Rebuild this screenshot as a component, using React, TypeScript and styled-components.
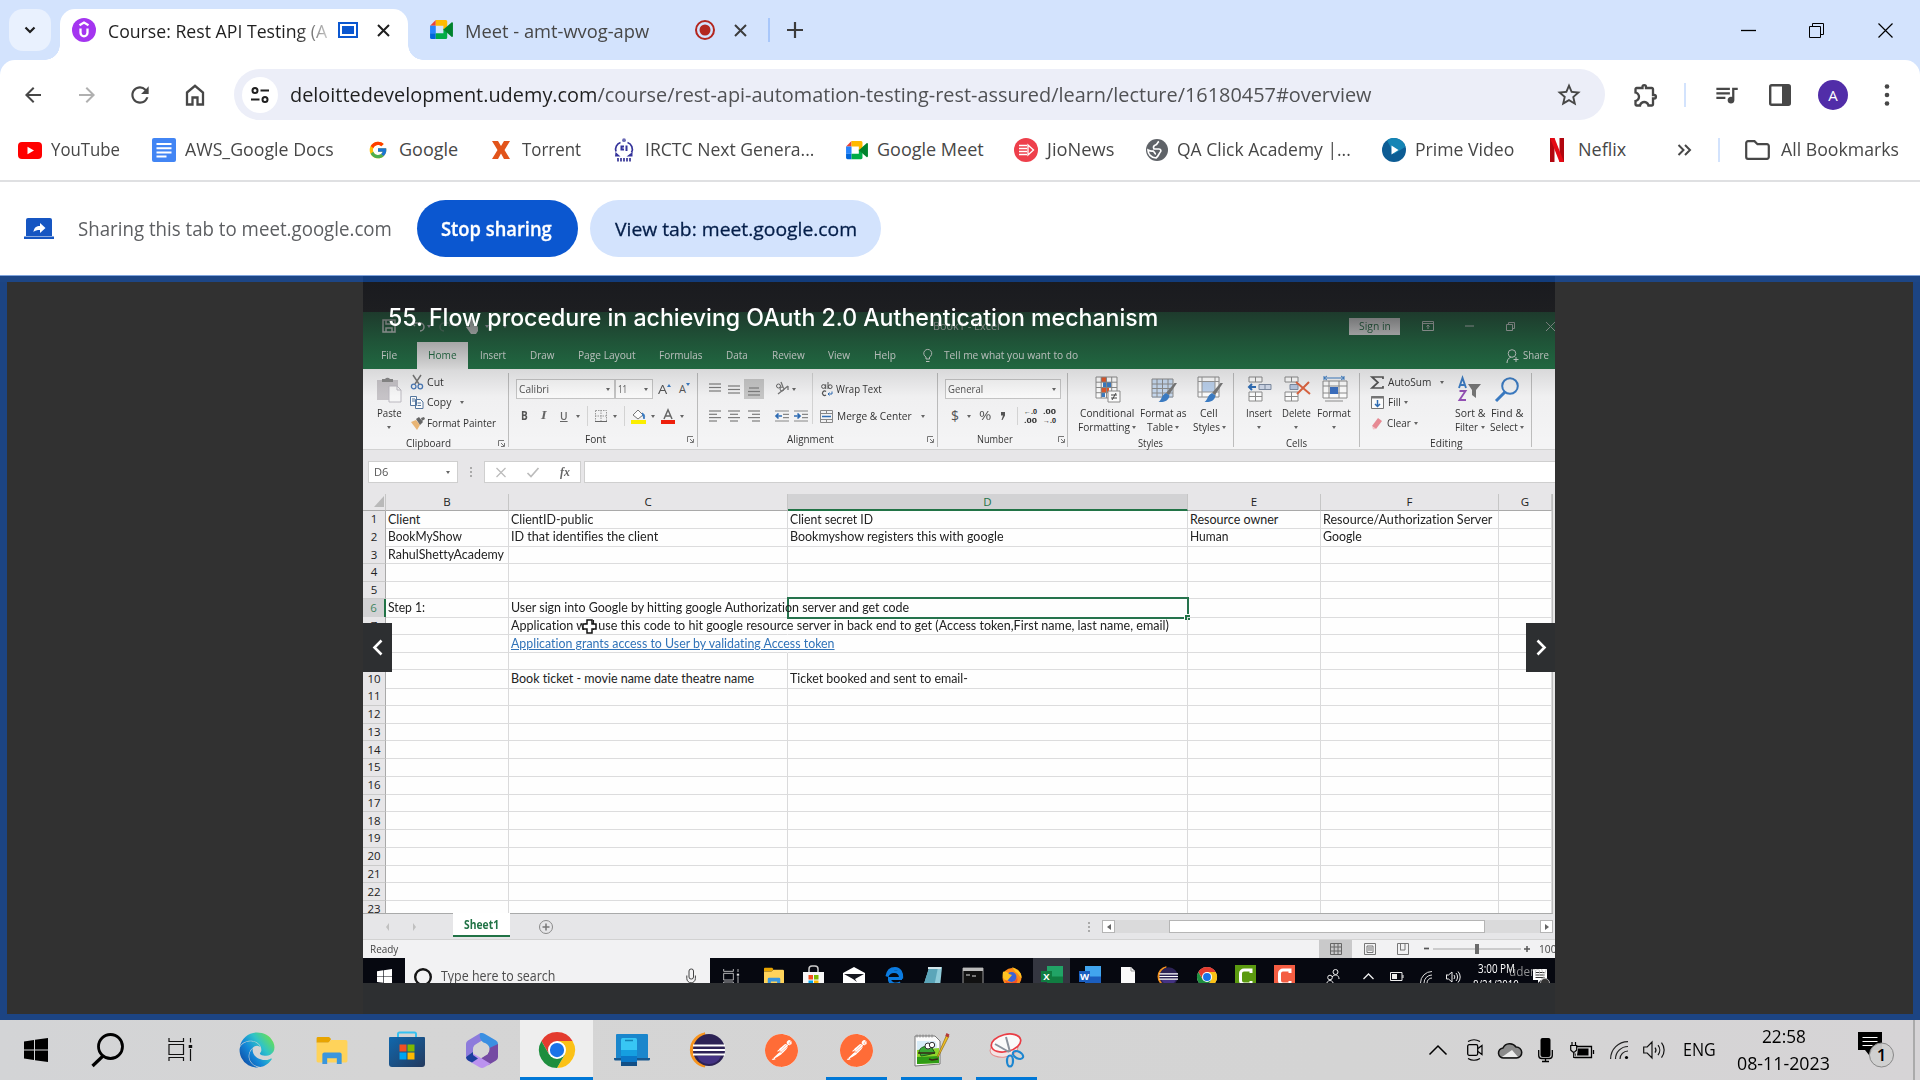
import React, { useLayoutEffect, useRef, useState } from "react";
import styled, { createGlobalStyle, css } from "styled-components";
import {
  MdArrowBack, MdArrowForward, MdRefresh, MdStarBorder, MdOutlineExtension,
  MdQueueMusic,
} from "react-icons/md";
import { FcGoogle } from "react-icons/fc";
import { FaEdge } from "react-icons/fa";
import { SiPostman } from "react-icons/si";

const UI = `"Open Sans", "Noto Sans", sans-serif`;
const SHEET = `Lato, "Open Sans", sans-serif`;

const Global = createGlobalStyle`
  *, *::before, *::after { box-sizing: border-box; }
  body { margin: 0; background: #fff; font-family: ${UI}; font-variant-ligatures: none; overflow: hidden; }
  svg { display: block; flex: none; }
`;

/* ---------- text that is condensed or widened to a known width ---------- */

const FitBox = styled.span<{ $w: number; $ml?: number; $size?: number; $color?: string; $weight?: number; $font?: string; $u?: boolean }>`
  display: inline-block;
  flex: none;
  width: ${(p) => p.$w}px;
  margin-left: ${(p) => p.$ml ?? 0}px;
  white-space: nowrap;
  line-height: 1.3;
  ${(p) => p.$size && css`font-size: ${p.$size}px;`}
  ${(p) => p.$color && css`color: ${p.$color};`}
  ${(p) => p.$weight && css`font-weight: ${p.$weight};`}
  ${(p) => p.$font && css`font-family: ${p.$font};`}
  ${(p) => p.$u && css`text-decoration: underline;`}
`;
const FitInner = styled.span`
  display: inline-block;
  transform-origin: 0 50%;
  text-decoration: inherit;
`;

type TProps = { w: number; ml?: number; s?: number; c?: string; b?: number; f?: string; u?: boolean; children: React.ReactNode };
function T({ w, ml, s, c, b, f, u, children }: TProps) {
  const ref = useRef<HTMLSpanElement>(null);
  const [k, setK] = useState(1);
  useLayoutEffect(() => {
    if (ref.current && ref.current.offsetWidth) setK(w / ref.current.offsetWidth);
  }, [w]);
  return (
    <FitBox $w={w} $ml={ml} $size={s} $color={c} $weight={b} $font={f} $u={u}>
      <FitInner ref={ref} style={{ transform: `scaleX(${k})` }}>{children}</FitInner>
    </FitBox>
  );
}

const Glyph = styled.svg<{ $ml?: number }>`
  margin-left: ${(p) => p.$ml ?? 0}px;
  overflow: visible;
`;
type GProps = { w: number; h: number; ml?: number; vb?: string; children: React.ReactNode };
const G = ({ w, h, ml, vb, children }: GProps) => (
  <Glyph width={w} height={h} viewBox={vb ?? `0 0 ${w} ${h}`} fill="none" $ml={ml}>{children}</Glyph>
);

const Slot = styled.span<{ $ml?: number; $c?: string }>`
  display: flex;
  flex: none;
  margin-left: ${(p) => p.$ml ?? 0}px;
  color: ${(p) => p.$c ?? "#474747"};
`;
const Rule = styled.i<{ $ml: number; $h: number; $c: string; $w?: number }>`
  flex: none;
  width: ${(p) => p.$w ?? 2}px;
  height: ${(p) => p.$h}px;
  margin-left: ${(p) => p.$ml}px;
  background: ${(p) => p.$c};
`;

/* ---------- shared logos ---------- */

const MeetLogo = ({ ml, w = 23 }: { ml: number; w?: number }) => (
  <G w={w} h={w * 0.83} ml={ml} vb="0 0 24 20">
    <path d="M6 0v6H0z" fill="#ea4335" />
    <path d="M0 6h6v8H0z" fill="#2684fc" />
    <path d="M0 14h6v6H1.6A1.6 1.6 0 0 1 0 18.400z" fill="#0066da" />
    <path d="M6 0h10.500A1.600 1.600 0 0 1 18 1.600V8l-4 3V6H6z" fill="#ffba00" />
    <path d="M6 14h8V9l4 3v6.400a1.600 1.600 0 0 1-1.600 1.600H6z" fill="#00ac47" />
    <path d="M14 10l8.500-7.500c.6-.5 1.500-.1 1.500.7v13.600c0 .8-.9 1.200-1.500.7z" fill="#00832d" />
  </G>
);
const ChromeLogo = ({ s, ml }: { s: number; ml?: number }) => (
  <G w={s} h={s} ml={ml} vb="0 0 48 48">
    <circle cx="24" cy="24" r="24" fill="#fff" />
    <path d="M44.800 12A24 24 0 0 1 24 48L34.400 30 34.400 18 24 12z" fill="#fbc116" />
    <path d="M3.200 12l10.400 18L24 24V12h20.800A24 24 0 0 0 3.200 12z" fill="#e33b2e" />
    <path d="M3.200 12L13.600 30 24 34 24 48A24 24 0 0 1 3.200 12z" fill="#1e8e3e" />
    <path d="M24 48L34.400 30 24 34 13.600 30z" fill="#1e8e3e" />
    <circle cx="24" cy="24" r="12" fill="#fff" />
    <circle cx="24" cy="24" r="9.500" fill="#1a73e8" />
  </G>
);
const EclipseLogo = ({ s, ml }: { s: number; ml?: number }) => (
  <G w={s} h={s} ml={ml} vb="0 0 36 36">
    <path d="M16 1.500A16.700 16.700 0 0 0 16 34.500A18 18 0 0 1 16 1.500z" fill="#f7941e" stroke="#f7941e" strokeWidth="2" />
    <circle cx="20" cy="18" r="16" fill="#2c2255" />
    <path d="M8 24h24a13 13 0 0 1-24 0z" fill="#443384" />
    <path d="M4 13.500h32M4 18h32M4 22.500h32" stroke="#fff" strokeWidth="2" />
  </G>
);
const FolderLogo = ({ w, h, ml }: { w: number; h: number; ml?: number }) => (
  <G w={w} h={h} ml={ml} vb="0 0 32 28">
    <path d="M0 1.500A1.500 1.500 0 0 1 1.500 0H13l2 2-2 4H0z" fill="#e8a400" />
    <path d="M0 6h12l3-3h15a2 2 0 0 1 2 2v20a1.500 1.500 0 0 1-1.500 1.500h-29A1.500 1.500 0 0 1 0 25z" fill="#ffd35a" />
    <path d="M6 28V18a2 2 0 0 1 2-2h16a2 2 0 0 1 2 2v10h-5v-6H11v6z" fill="#3a96dd" />
  </G>
);
const StoreLogo = ({ w, h, ml }: { w: number; h: number; ml?: number }) => (
  <G w={w} h={h} ml={ml} vb="0 0 36 36">
    <path d="M9 6V2a1.500 1.500 0 0 1 1.500-1.500h15A1.500 1.500 0 0 1 27 2v4" stroke="#35c1f1" strokeWidth="2" />
    <defs><linearGradient id="storeFill" x1="0" y1="0" x2="1" y2="1"><stop offset="0" stopColor="#1068ae" /><stop offset="1" stopColor="#243a5e" /></linearGradient></defs>
    <path d="M0 6a1 1 0 0 1 1-1h34a1 1 0 0 1 1 1v26a3 3 0 0 1-3 3H3a3 3 0 0 1-3-3z" fill="url(#storeFill)" />
    <path d="M10.500 12.500h7v7h-7z" fill="#f25022" /><path d="M18.500 12.500h7v7h-7z" fill="#7fba00" />
    <path d="M10.500 20.500h7v7h-7z" fill="#00a4ef" /><path d="M18.500 20.500h7v7h-7z" fill="#ffb900" />
  </G>
);
const WinLogo = ({ s, c, ml }: { s: number; c: string; ml?: number }) => (
  <G w={s} h={s} ml={ml} vb="0 0 24 24">
    <path d="M0 3.400L10 2v9.500H0zM11 1.800L24 0v11.500H11zM0 12.500h10V22L0 20.600zM11 12.500h13V24l-13-1.800z" fill={c} />
  </G>
);
const TaskViewGlyph = ({ s, c, ml }: { s: number; c: string; ml?: number }) => (
  <G w={s} h={s * 0.96} ml={ml} vb="0 0 24 23">
    <path d="M1 0v3.500h14.500V0M1 23v-3.500h14.500V23M1 6.500h14.500v10H1zM22.500 0v4.500M22.500 11v12" stroke={c} strokeWidth="1.200" />
    <path d="M20.700 7h3.500v3h-3.500z" fill={c} />
  </G>
);
const CloseGlyph = ({ ml, c = "#3c3c3c" }: { ml: number; c?: string }) => (
  <G w={13} h={13} ml={ml}><path d="M1 1l11 11M12 1L1 12" stroke={c} strokeWidth="2" /></G>
);

/* ---------- browser chrome ---------- */

const Screen = styled.div`
  width: 1920px;
  height: 1080px;
  display: flex;
  flex-direction: column;
`;
const TabStrip = styled.header`
  display: flex;
  height: 60px;
  padding: 9px 27px 0 9px;
  background: #d3e3fd;
`;
const TabSearch = styled.div`
  display: flex;
  align-items: center;
  justify-content: center;
  width: 42px;
  height: 42px;
  border-radius: 14px;
  background: #e9f1fe;
`;
const TabBase = styled.div`
  display: flex;
  align-items: center;
  height: 42px;
`;
const ActiveTab = styled(TabBase)`
  position: relative;
  width: 348px;
  height: 51px;
  margin-left: 9px;
  padding: 0 0 9px 12px;
  border-radius: 15px 15px 0 0;
  background: #fff;
  &::before, &::after {
    content: "";
    position: absolute;
    bottom: 0;
    width: 15px;
    height: 15px;
  }
  &::before { left: -15px; background: radial-gradient(circle at 0 0, transparent 14.500px, #fff 15px); }
  &::after { right: -15px; background: radial-gradient(circle at 100% 0, transparent 14.500px, #fff 15px); }
`;
const TabTitle = styled.div<{ $fade?: boolean }>`
  display: flex;
  margin-left: 12px;
  padding-top: 3px;
  color: ${(p) => (p.$fade ? "#1f1f1f" : "#474747")};
  ${(p) => p.$fade && css`mask-image: linear-gradient(90deg, #000 86%, rgba(0, 0, 0, 0.25) 100%);`}
`;
const WindowControls = styled(TabBase)`
  margin-left: auto;
`;
const TopPanel = styled.div`
  background: #d3e3fd;
`;
const TopPanelInner = styled.div`
  height: 122px;
  border-radius: 15px 15px 0 0;
  border-bottom: 2px solid #dfe0e2;
  background: #fff;
`;
const Toolbar = styled.nav`
  display: flex;
  align-items: center;
  height: 60px;
  padding: 9px 0 0 21px;
`;
const Omnibox = styled.div`
  display: flex;
  align-items: center;
  width: 1371px;
  height: 51px;
  margin-left: 27px;
  padding: 0 22px 0 8px;
  border-radius: 26px;
  background: #eceef8;
`;
const SiteInfo = styled.span`
  display: flex;
  align-items: center;
  justify-content: center;
  width: 36px;
  height: 36px;
  border-radius: 50%;
  background: #fff;
`;
const UrlHost = styled.span`
  color: #1f1f1f;
`;
const Push = styled.span`
  margin-left: auto;
  display: flex;
  color: #474747;
`;
const Avatar = styled.span`
  display: flex;
  align-items: center;
  justify-content: center;
  width: 30px;
  height: 30px;
  margin-left: 27px;
  border-radius: 50%;
  background: #512da8;
  color: #fff;
  font-size: 15px;
`;
const Bookmarks = styled.nav`
  display: flex;
  align-items: center;
  height: 60px;
  padding-left: 18px;
  font-size: 18px;
  color: #474747;
`;
const ShareBar = styled.div`
  display: flex;
  align-items: center;
  height: 94px;
  padding-left: 24px;
  border-bottom: 1px solid #7fa3dc;
  background: #fff;
`;
const Pill = styled.button<{ $w: number; $ml: number; $bg: string; $fg: string }>`
  display: flex;
  align-items: center;
  justify-content: center;
  width: ${(p) => p.$w}px;
  height: 57px;
  margin: 0 0 0 ${(p) => p.$ml}px;
  padding: 2px 2px 0 0;
  border: 0;
  border-radius: 29px;
  background: ${(p) => p.$bg};
  color: ${(p) => p.$fg};
  font-family: ${UI};
  -webkit-text-stroke: 0.3px currentColor;
`;

function BrowserTop() {
  return (
    <>
      <TabStrip>
        <TabSearch><G w={12} h={8}><path d="M1.500 1.500L6 6l4.500-4.500" stroke="#1f1f1f" strokeWidth="2.200" /></G></TabSearch>
        <ActiveTab>
          <G w={24} h={24}>
            <circle cx="12" cy="12" r="12" fill="#a435f0" />
            <path d="M7.500 7.200L12 4.600l4.500 2.600M8.500 10.500v4.300a3.500 3.500 0 0 0 7 0v-4.300" stroke="#fff" strokeWidth="2.300" />
          </G>
          <TabTitle $fade><T w={219} s={18}>Course: Rest API Testing (A</T></TabTitle>
          <G w={20} h={16} ml={11}>
            <path d="M1 1h18v14H1z" stroke="#0b57d0" strokeWidth="2" /><path d="M4 4h12v8H4z" fill="#0b57d0" />
          </G>
          <CloseGlyph ml={19} c="#1f1f1f" />
        </ActiveTab>
        <TabBase>
          <MeetLogo ml={22} />
          <TabTitle><T w={184} s={18}>Meet - amt-wvog-apw</T></TabTitle>
          <G w={20} h={20} ml={46}>
            <circle cx="10" cy="10" r="9" stroke="#b3261e" strokeWidth="2" /><circle cx="10" cy="10" r="5.500" fill="#b3261e" />
          </G>
          <CloseGlyph ml={19} />
          <Rule $ml={21} $h={24} $c="#a8c7fa" />
          <G w={16} h={16} ml={17}><path d="M8 0v16M0 8h16" stroke="#3c3c3c" strokeWidth="2.200" /></G>
        </TabBase>
        <WindowControls>
          <G w={15} h={15}><path d="M0 7.500h15" stroke="#000" strokeWidth="1.300" /></G>
          <G w={15} h={15} ml={53}><path d="M.5 3.500h11v11H.5zM3.500 3.500v-3h11v11h-3" stroke="#000" /></G>
          <G w={15} h={15} ml={54}><path d="M.5.5l14 14M14.500.5l-14 14" stroke="#000" strokeWidth="1.200" /></G>
        </WindowControls>
      </TabStrip>
      <TopPanel>
        <TopPanelInner>
          <Toolbar>
            <Slot><MdArrowBack size={24} /></Slot>
            <Slot $ml={30} $c="#b0b0b0"><MdArrowForward size={24} /></Slot>
            <Slot $ml={28}><MdRefresh size={26} /></Slot>
            <G w={24} h={24} ml={30}>
              <path d="M4 9.500L12 2.800l8 6.700V21.500h-5.500v-7h-5v7H4z" stroke="#474747" strokeWidth="2.300" />
            </G>
            <Omnibox>
              <SiteInfo>
                <G w={18} h={18}>
                  <circle cx="4" cy="4.500" r="2.500" stroke="#1f1f1f" strokeWidth="2" /><path d="M9.500 4.500H18M0 13.500h8.500" stroke="#1f1f1f" strokeWidth="2" />
                  <circle cx="14" cy="13.500" r="2.500" stroke="#1f1f1f" strokeWidth="2" />
                </G>
              </SiteInfo>
              <T w={1082} ml={12} s={20.5} c="#505154">
                <UrlHost>deloittedevelopment.udemy.com</UrlHost>/course/rest-api-automation-testing-rest-assured/learn/lecture/16180457#overview
              </T>
              <Push><MdStarBorder size={28} /></Push>
            </Omnibox>
            <Slot $ml={27}><MdOutlineExtension size={28} /></Slot>
            <Rule $ml={24} $h={24} $c="#d3e3fd" />
            <Slot $ml={27}><MdQueueMusic size={27} /></Slot>
            <G w={22} h={22} ml={29}>
              <rect x="1.200" y="1.200" width="19.600" height="19.600" rx="1.500" stroke="#474747" strokeWidth="2.400" />
              <path d="M13 1h8v20h-8z" fill="#474747" />
            </G>
            <Avatar>A</Avatar>
            <G w={6} h={22} ml={36}>
              <circle cx="3" cy="2.500" r="2.300" fill="#474747" /><circle cx="3" cy="11" r="2.300" fill="#474747" /><circle cx="3" cy="19.500" r="2.300" fill="#474747" />
            </G>
          </Toolbar>
          <Bookmarks>
            <G w={24} h={17}><rect width="24" height="17" rx="4" fill="#f00" /><path d="M9.500 4.800l6.500 3.700-6.500 3.700z" fill="#fff" /></G>
            <T w={69} ml={9}>YouTube</T>
            <G w={24} h={24} ml={32}>
              <rect width="24" height="24" rx="2" fill="#4285f4" /><path d="M4.500 6h15M4.500 10.200h15M4.500 14.400h15M4.500 18.600h10" stroke="#fff" strokeWidth="2" />
            </G>
            <T w={149} ml={9}>AWS_Google Docs</T>
            <Slot $ml={34}><FcGoogle size={20} /></Slot>
            <T w={59} ml={11}>Google</T>
            <G w={18} h={18} ml={34}><path d="M0 0h6l3 5 3-5h6l-5.500 9L18 18h-6l-3-5.500L6 18H0l5.500-9z" fill="#e2541b" /></G>
            <T w={59} ml={12}>Torrent</T>
            <G w={22} h={24} ml={32}>
              <path d="M7.500 4.500a7 7 0 0 0-4.500 9M14.500 4.500a7 7 0 0 1 4 10" stroke="#34339a" strokeWidth="1.700" />
              <path d="M7.500 7.500h3.500v2H9.500v1H11v2H7.500zM12.500 7.500h2v5.500h-2zM2.500 14l5 4.500H2zM19.500 14l-6 4.500h6z" fill="#35349b" /><circle cx="11" cy="2.200" r="1.900" fill="#6c6bb5" />
              <path d="M4 21.800h14" stroke="#5352a5" strokeWidth="3.500" strokeDasharray="2 1" />
            </G>
            <T w={169} ml={10}>IRCTC Next Genera...</T>
            <MeetLogo ml={32} w={22} />
            <T w={107} ml={9}>Google Meet</T>
            <G w={24} h={24} ml={30}>
              <circle cx="12" cy="12" r="12" fill="#ee3f4b" /><path d="M5 7.500h8M5 10.500h8M5 13.500h8M5 16.500h8" stroke="#fff" strokeWidth="1.700" />
              <path d="M14 7l5.500 5-5.500 5z" stroke="#fff" strokeWidth="1.300" />
            </G>
            <T w={67} ml={9}>JioNews</T>
            <G w={22} h={22} ml={32}>
              <circle cx="11" cy="11" r="11" fill="#5f6368" />
              <path d="M13 2.500c-2 1-1.500 3-3.500 3.500S7 8.500 8 10h5c2 0 2.500 2 1 3.500s-1 3.500-4 5.500c-5-.5-8-4-8-8 2 1 3.500 1.500 5 1 2 1 1.500 3 3 3" stroke="#fff" strokeWidth="1.700" />
            </G>
            <T w={174} ml={9}>QA Click Academy |...</T>
            <G w={24} h={24} ml={31}>
              <circle cx="12" cy="12" r="12" fill="#0d5c94" /><path d="M5 2.200a12 12 0 0 1 18.500 6.500L12 16z" fill="#1585b5" /><path d="M9.500 7.500l7 4.500-7 4.500z" fill="#fff" />
            </G>
            <T w={99} ml={9}>Prime Video</T>
            <G w={14} h={24} ml={36}>
              <path d="M0 0h4.500v24H0zM9.500 0H14v24H9.500z" fill="#b1060f" /><path d="M0 0h4.500L14 24H9.500z" fill="#e50914" />
            </G>
            <T w={48} ml={14}>Neflix</T>
            <G w={15} h={12} ml={51}><path d="M1.500 1l5 5-5 5M8 1l5 5-5 5" stroke="#474747" strokeWidth="2" /></G>
            <Rule $ml={26} $h={24} $c="#d3e3fd" />
            <G w={25} h={20} ml={25}>
              <path d="M1.200 3a1.800 1.800 0 0 1 1.800-1.800h6.500l3 3H22A1.800 1.800 0 0 1 23.800 6v11a1.800 1.800 0 0 1-1.800 1.800H3A1.800 1.800 0 0 1 1.200 17z" stroke="#474747" strokeWidth="2.200" />
            </G>
            <T w={118} ml={11}>All Bookmarks</T>
          </Bookmarks>
        </TopPanelInner>
      </TopPanel>
      <ShareBar>
        <G w={30} h={21}>
          <path d="M4 0h22a2 2 0 0 1 2 2v16H2V2a2 2 0 0 1 2-2zM0 18.500h30V21H0z" fill="#1656c2" />
          <path d="M9.500 14c.5-4.500 3-6 6.500-6V5l5.500 5-5.500 5v-3c-3 0-5 .5-6.500 2z" fill="#fff" />
        </G>
        <T w={314} ml={24} s={20} c="#5d5f62">Sharing this tab to meet.google.com</T>
        <Pill $w={161} $ml={25} $bg="#0b57d0" $fg="#fff"><T w={111} s={19} b={600}>Stop sharing</T></Pill>
        <Pill $w={291} $ml={12} $bg="#d3e3fd" $fg="#041e49"><T w={242} s={19} b={500}>View tab: meet.google.com</T></Pill>
      </ShareBar>
    </>
  );
}

/* ---------- lecture player ---------- */

const Page = styled.main`
  flex: none;
  height: 744px;
  padding: 6px 7px;
  background:
    linear-gradient(90deg, #1d4686 363px, #123c7b 363px, #123c7b 1555px, #1d4686 1555px) top / 100% 6px no-repeat,
    #1c4483;
`;
const PageBody = styled.div`
  height: 732px;
  padding-left: 356px;
  background: #313131;
`;
const Player = styled.section`
  position: relative;
  width: 1192px;
  height: 732px;
  padding-top: 30px;
  background: linear-gradient(#1a1b1f, #1d1e21 30px, #2d2f31 30px);
`;
const Video = styled.div`
  height: 671px;
  overflow: hidden;
  background: #e6e6e6;
`;
const Shade = styled.div`
  position: absolute;
  top: 30px;
  left: 0;
  width: 100%;
  height: 130px;
  background: linear-gradient(rgba(28, 29, 31, 0.66), rgba(28, 29, 31, 0.36) 23%, rgba(28, 29, 31, 0.12) 45%, rgba(28, 29, 31, 0.02) 65%, rgba(28, 29, 31, 0));
`;
const LectureTitle = styled.div`
  position: absolute;
  top: 20px;
  left: 25px;
`;
const NavButton = styled.div<{ $side: "left" | "right" }>`
  position: absolute;
  top: 341px;
  ${(p) => p.$side}: 0;
  display: flex;
  align-items: center;
  justify-content: center;
  width: 29px;
  height: 49px;
  background: #2d2f31;
`;
const Watermark = styled.div`
  position: absolute;
  top: 677px;
  left: 1146px;
`;

/* ---------- spreadsheet window ---------- */

const Caret = styled.i<{ $ml?: number; $c?: string }>`
  flex: none;
  width: 0;
  height: 0;
  margin-left: ${(p) => p.$ml ?? 0}px;
  border: 2.500px solid transparent;
  border-top: 3px solid ${(p) => p.$c ?? "#666"};
  border-bottom: 0;
`;
const TitleRow = styled.div`
  display: flex;
  align-items: center;
  height: 30px;
  padding: 0 0 2px 19px;
  background: #217346;
`;
const SignIn = styled.div`
  display: flex;
  align-items: center;
  justify-content: center;
  width: 51px;
  height: 17px;
  margin-left: 349px;
  background: #fff;
`;
const MenuRow = styled.div`
  display: flex;
  align-items: center;
  height: 27px;
  background: #217346;
  color: #e9f1ec;
  font-size: 11.500px;
`;
const HomeTab = styled.span`
  display: flex;
  align-items: center;
  justify-content: center;
  align-self: stretch;
  width: 51px;
  margin-left: 20px;
  background: #f3f3f3;
  color: #217346;
`;
const Ribbon = styled.div`
  display: flex;
  height: 81px;
  padding-top: 4px;
  border-bottom: 1px solid #d2d2d2;
  background: #f4f4f5;
  font-size: 11.500px;
  color: #333;
`;
const Group = styled.div<{ $w: number }>`
  display: flex;
  flex-direction: column;
  flex: none;
  width: ${(p) => p.$w}px;
  height: 74px;
  border-right: 1px solid #bdbdbd;
`;
const GroupBody = styled.div`
  display: flex;
  height: 62px;
`;
const GroupFoot = styled.div`
  display: flex;
  align-items: center;
  height: 15px;
  margin-top: 1px;
`;
const Stack = styled.div`
  display: flex;
  flex-direction: column;
`;
const Line = styled.div<{ $h: number; $pl?: number }>`
  display: flex;
  align-items: center;
  height: ${(p) => p.$h}px;
  padding-left: ${(p) => p.$pl ?? 0}px;
`;
const BigButton = styled.div<{ $w: number; $ml?: number }>`
  display: flex;
  flex-direction: column;
  align-items: center;
  flex: none;
  width: ${(p) => p.$w}px;
  margin-left: ${(p) => p.$ml ?? 0}px;
  padding-top: 3px;
`;
const BigLine = styled.div<{ $mt?: number }>`
  display: flex;
  align-items: center;
  height: 14.500px;
  margin-top: ${(p) => p.$mt ?? 0}px;
`;
const Combo = styled.div<{ $w: number; $ml?: number }>`
  display: flex;
  align-items: center;
  flex: none;
  width: ${(p) => p.$w}px;
  height: 20px;
  margin-left: ${(p) => p.$ml ?? 0}px;
  padding: 0 4px 0 2px;
  border: 1px solid #c6c6c6;
  background: #fcfcfc;
  color: #555;
`;
const ComboCaret = styled(Caret)`
  margin-left: auto;
`;
const Pressed = styled.span`
  display: flex;
  align-items: center;
  justify-content: center;
  width: 20px;
  height: 20px;
  margin-left: 4px;
  background: #c8c8c8;
`;

const Launcher = ({ ml }: { ml: number }) => (
  <G w={7} h={7} ml={ml}><path d="M.5 6V.5H6M3 3l3 3M6.500 3v3.500H3" stroke="#777" /></G>
);
const Bars = ({ ml, rows }: { ml?: number; rows: [number, number, number][] }) => (
  <G w={12} h={12} ml={ml}>{rows.map(([x, y, w]) => <path key={y} d={`M${x} ${y}h${w}`} stroke="#7d7d7d" strokeWidth="1.200" />)}</G>
);
const Grid27 = ({ c }: { c: string }) => (
  <path d="M2 1h21v21H2zM2 6.200h21M2 11.500h21M2 16.700h21M7.200 1v21M12.500 1v21M17.700 1v21" stroke={c} />
);
const Brush = () => (
  <><path d="M27 7l-8 12-3-2L24.500 7z" fill="#777" /><path d="M16 17l3.500 2.500c-1 6-6 7-11 6.500 3-1.500 3-7 7.500-9z" fill="#3b7cc4" /></>
);

function RibbonPanel() {
  return (
    <Ribbon>
      <Group $w={146}>
        <GroupBody>
          <BigButton $w={26} $ml={13}>
            <G w={26} h={27}>
              <path d="M1 4h21v20H1z" fill="#c9c6ca" /><path d="M6 6V3h3a3 3 0 0 1 5 0h3v3z" fill="#8b8b8b" />
              <path d="M13 10h8l4 4v12H13z" fill="#fafafa" stroke="#bdbac2" /><path d="M21 10v4h4" stroke="#bdbac2" />
            </G>
            <BigLine $mt={3}><T w={24.5}>Paste</T></BigLine>
            <BigLine><Caret /></BigLine>
          </BigButton>
          <Stack>
            <Line $h={19} $pl={9}>
              <G w={12} h={15}><path d="M2 0l6 9M10 0L4 9" stroke="#777" strokeWidth="1.500" /><circle cx="2.700" cy="11.500" r="2.300" stroke="#4a7ab8" strokeWidth="1.300" /><circle cx="9.300" cy="11.500" r="2.300" stroke="#4a7ab8" strokeWidth="1.300" /></G>
              <T w={16.5} ml={4}>Cut</T>
            </Line>
            <Line $h={21} $pl={8}>
              <G w={14} h={13}><path d="M.5.5h6v9h-6zM5.500 3.500h5l2.500 2.500v6.500H5.500z" fill="#fff" stroke="#5577a0" /><path d="M2 3h3M2 5h3M7.500 7h3.500M7.500 9.500h3.500" stroke="#5577a0" /></G>
              <T w={24.500} ml={3}>Copy</T><Caret $ml={8} />
            </Line>
            <Line $h={21} $pl={9}>
              <G w={14} h={13}><path d="M0 5l5-2 4 5-3 5z" fill="#eab676" /><path d="M5 2l3-2 4 5-3 3zM10 1l3-1 1 2-3 2z" fill="#666" /></G>
              <T w={69} ml={2}>Format Painter</T>
            </Line>
          </Stack>
        </GroupBody>
        <GroupFoot><T w={45} ml={43}>Clipboard</T><Launcher ml={47} /></GroupFoot>
      </Group>

      <Group $w={189}>
        <GroupBody>
          <Stack>
            <Line $h={32} $pl={7}>
              <Combo $w={99}><T w={30}>Calibri</T><ComboCaret /></Combo>
              <Combo $w={38}><T w={9}>11</T><ComboCaret /></Combo>
              <T w={9} ml={5} s={13} c="#555">A</T><G w={4} h={10}><path d="M0 3l2-3 2 3z" fill="#3b7cc4" /></G>
              <T w={7} ml={8} s={11} c="#555">A</T><G w={4} h={12}><path d="M0 0h4L2 3z" fill="#3b7cc4" /></G>
            </Line>
            <Line $h={22} $pl={12}>
              <T w={7} s={11.5} b={700} c="#555">B</T><T w={6} ml={13} s={12} b={600} c="#666" f={`"Liberation Serif"`}><em>I</em></T><T w={8} ml={13} s={11.5} b={600} c="#666" u>U</T>
              <Caret $ml={8} /><Rule $ml={7} $h={20} $c="#d5d5d5" $w={1} />
              <G w={12} h={12} ml={7}><path d="M.5.5h11v11H.5zM6 0v12M0 6h12" stroke="#9a9a9a" strokeDasharray="1.500 1" /><path d="M0 11.500h12" stroke="#666" /></G>
              <Caret $ml={6} /><Rule $ml={7} $h={20} $c="#d5d5d5" $w={1} />
              <G w={15} h={15} ml={6}><path d="M2 6l5-5 5 5-5 4z" fill="#fff" stroke="#777" /><path d="M11 4c3 1 3 4 2 6z" fill="#3b7cc4" stroke="#3b7cc4" /><path d="M0 11h15v4H0z" fill="#fdf000" /></G>
              <Caret $ml={5} />
              <G w={14} h={15} ml={6}><path d="M3 10L7 .8 11 10M4.500 7h5" stroke="#666" strokeWidth="1.500" /><path d="M0 11h14v4H0z" fill="#f0200c" /></G>
              <Caret $ml={5} />
            </Line>
          </Stack>
        </GroupBody>
        <GroupFoot><T w={21} ml={76}>Font</T><Launcher ml={81} /></GroupFoot>
      </Group>

      <Group $w={240}>
        <GroupBody>
          <Stack>
            <Line $h={32} $pl={11}>
              <Bars rows={[[0, 1, 12], [0, 4.500, 12], [0, 8, 12]]} />
              <Bars ml={7} rows={[[0, 3, 12], [0, 6.500, 12], [0, 10, 12]]} />
              <Pressed><Bars rows={[[1, 5, 10], [0, 8.500, 12], [0, 12, 12]]} /></Pressed>
              <G w={14} h={14} ml={11}><circle cx="3.500" cy="4" r="2" stroke="#666" /><circle cx="7" cy="7" r="2" stroke="#666" /><path d="M6 0l2 5M3 12L13 4M13 4v4" stroke="#777" strokeWidth="1.300" /></G>
              <Caret $ml={3} />
            </Line>
            <Line $h={22} $pl={11}>
              <Bars rows={[[0, 1, 12], [0, 4.300, 8], [0, 7.600, 12], [0, 11, 8]]} />
              <Bars ml={7} rows={[[0, 1, 12], [2, 4.300, 8], [0, 7.600, 12], [2, 11, 8]]} />
              <Bars ml={8} rows={[[0, 1, 12], [4, 4.300, 8], [0, 7.600, 12], [4, 11, 8]]} />
              <G w={14} h={12} ml={15}><path d="M0 1h14M8 4.300h6M8 7.600h6M0 11h14" stroke="#888" strokeWidth="1.200" /><path d="M7 6H1M3.500 3.500L1 6l2.500 2.500" stroke="#2f6db5" strokeWidth="1.700" /></G>
              <G w={14} h={12} ml={5}><path d="M0 1h14M8 4.300h6M8 7.600h6M0 11h14" stroke="#888" strokeWidth="1.200" /><path d="M0 6h6M3.500 3.500L6 6 3.500 8.500" stroke="#2f6db5" strokeWidth="1.700" /></G>
            </Line>
          </Stack>
          <Rule $ml={4} $h={51} $c="#d5d5d5" $w={1} />
          <Stack>
            <Line $h={32} $pl={8}>
              <G w={12} h={14}>
                <circle cx="2.500" cy="4.500" r="1.900" stroke="#555" /><path d="M4.700 2.300V7M7 0v7" stroke="#555" /><circle cx="9.200" cy="4.700" r="1.900" stroke="#555" />
                <path d="M5 9.500a2.200 2.200 0 1 0 0 3.500" stroke="#555" strokeWidth="1.200" /><path d="M7 12h4V9.500M8.500 10.500L7 12l1.500 1.500" stroke="#2f6db5" />
              </G>
              <T w={46} ml={3}>Wrap Text</T>
            </Line>
            <Line $h={22} $pl={7}>
              <G w={13} h={13}><path d="M.5.5h12v12H.5zM0 3.500h13M0 9.500h13M6.500 0v3.500M6.500 9.500V13" stroke="#888" /><path d="M2 6.500h9" stroke="#2f6db5" strokeWidth="1.500" /></G>
              <T w={75} ml={4}>Merge &amp; Center</T><Caret $ml={9} />
            </Line>
          </Stack>
        </GroupBody>
        <GroupFoot><T w={47} ml={89}>Alignment</T><Launcher ml={93} /></GroupFoot>
      </Group>

      <Group $w={130}>
        <GroupBody>
          <Stack>
            <Line $h={32} $pl={7}><Combo $w={116}><T w={35}>General</T><ComboCaret /></Combo></Line>
            <Line $h={22} $pl={13}>
              <T w={8} s={14} c="#555">$</T><Caret $ml={8} /><T w={12} ml={8} s={12.5} c="#555">%</T>
              <G w={4} h={8} ml={10}><path d="M0 0h4v3.500L1.500 8H.5L2 3.500H0z" fill="#555" /></G>
              <Rule $ml={12} $h={18} $c="#d5d5d5" $w={1} />
              <Stack><T w={13} ml={6} s={7}><b>←.0</b></T><T w={13} ml={6} s={7}><b>.00</b></T></Stack>
              <Stack><T w={13} ml={6} s={7}><b>.00</b></T><T w={13} ml={6} s={7}><b>→.0</b></T></Stack>
            </Line>
          </Stack>
        </GroupBody>
        <GroupFoot><T w={36} ml={39}>Number</T><Launcher ml={45} /></GroupFoot>
      </Group>

      <Group $w={166}>
        <GroupBody>
          <BigButton $w={60} $ml={9}>
            <G w={27} h={27}>
              <path d="M2 1h21v21H2z" fill="#fff" /><path d="M7 1h6v5H7zM7 12h8v5H7z" fill="#e2592b" /><path d="M9 6h8v5H9zM7 17h4v4H7z" fill="#3b7cc4" /><Grid27 c="#8c8c8c" />
              <path d="M14 15h12v11H14z" fill="#fff" stroke="#8c8c8c" /><path d="M17 19h6M17 22h6M22 17l-4 7" stroke="#444" />
            </G>
            <BigLine $mt={3}><T w={54}>Conditional</T></BigLine>
            <BigLine><T w={52}>Formatting</T><Caret $ml={2} /></BigLine>
          </BigButton>
          <BigButton $w={48} $ml={2}>
            <G w={27} h={27}><path d="M2 3h21v19H2z" fill="#c8dbf2" /><path d="M2 3h21v18H2zM2 8h21M2 12.500h21M2 17h21M7 3v18M12.500 3v18M18 3v18" stroke="#8c8c8c" /><Brush /></G>
            <BigLine $mt={3}><T w={47}>Format as</T></BigLine>
            <BigLine><T w={26}>Table</T><Caret $ml={2} /></BigLine>
          </BigButton>
          <BigButton $w={34} $ml={5}>
            <G w={27} h={27}><path d="M2 1h21v20H2z" fill="#fff" stroke="#8c8c8c" /><path d="M6 6h13v10H6z" fill="#bcd2ee" /><path d="M2 5.500h21M2 16h21M6 1v20M19 1v20" stroke="#999" /><Brush /></G>
            <BigLine $mt={3}><T w={18}>Cell</T></BigLine>
            <BigLine><T w={27}>Styles</T><Caret $ml={2} /></BigLine>
          </BigButton>
        </GroupBody>
        <GroupFoot><T w={25} ml={70}>Styles</T></GroupFoot>
      </Group>

      <Group $w={126}>
        <GroupBody>
          <BigButton $w={28} $ml={11}>
            <G w={27} h={27}><path d="M3 1h13v5H3zM9.500 1v5M3 16h13v9H3zM9.500 16v9M3 20.500h13" stroke="#8c8c8c" fill="#fff" /><path d="M13 8.500h12v5H13zM19 8.500v5" fill="#d3dced" stroke="#7f8da3" /><path d="M10 11H3M6 8l-3 3 3 3" stroke="#2f6db5" strokeWidth="2" /></G>
            <BigLine $mt={3}><T w={26}>Insert</T></BigLine><BigLine><Caret /></BigLine>
          </BigButton>
          <BigButton $w={32} $ml={7}>
            <G w={27} h={27}><path d="M2 1h13v5H2zM8.500 1v5M2 16h13v9H2zM8.500 16v9M2 20.500h13" stroke="#8c8c8c" fill="#fff" /><path d="M7 8.500h8v5H7z" fill="#b9c9e2" stroke="#7f8da3" /><path d="M13 6l14 12M26 6L14 18" stroke="#dd6440" strokeWidth="2" /></G>
            <BigLine $mt={3}><T w={29}>Delete</T></BigLine><BigLine><Caret /></BigLine>
          </BigButton>
          <BigButton $w={36} $ml={4}>
            <G w={27} h={27}><path d="M3 2h20M3 0v4M23 0v4M6 0L3 2l3 2M20 0l3 2-3 2" stroke="#3b7cc4" /><path d="M2 5h24v17H2zM2 10h24M2 17h24M8 5v17M18 5v17M4 25h18" stroke="#8c8c8c" fill="#fff" /><path d="M9 11h8v7H9z" fill="#3b6fc0" /></G>
            <BigLine $mt={3}><T w={34}>Format</T></BigLine><BigLine><Caret /></BigLine>
          </BigButton>
        </GroupBody>
        <GroupFoot><T w={21} ml={52}>Cells</T></GroupFoot>
      </Group>

      <Group $w={172}>
        <GroupBody>
          <Stack>
            <Line $h={19} $pl={11}>
              <G w={13} h={13}><path d="M12 3V1H1l6 5.500L1 12h11v-2" stroke="#555" strokeWidth="1.700" /></G>
              <T w={43} ml={4}>AutoSum</T><Caret $ml={9} />
            </Line>
            <Line $h={21} $pl={11}>
              <G w={13} h={13}><path d="M.5.5h12v12H.5z" fill="#fff" stroke="#777" /><path d="M0 1.500h13" stroke="#777" strokeWidth="2" /><path d="M6.500 4v6M4 8l2.500 2.500L9 8" stroke="#2f6db5" strokeWidth="1.500" /></G>
              <T w={13} ml={4}>Fill</T><Caret $ml={3} />
            </Line>
            <Line $h={21} $pl={11}>
              <G w={12} h={12}><path d="M7 0l4 3-6 8-4-3z" fill="#e88a94" /><path d="M1 8l4 3-3 .5z" fill="#f4c3c9" /></G>
              <T w={24} ml={4}>Clear</T><Caret $ml={3} />
            </Line>
          </Stack>
          <BigButton $w={34} $ml={9}>
            <G w={27} h={27}>
              <path d="M2 12L5.500 2 9 12M3.500 9h4.500" stroke="#3b7cc4" strokeWidth="1.900" /><path d="M2.500 15h6l-6 9h6.500" stroke="#9450b5" strokeWidth="1.900" />
              <path d="M11 8h13l-5 6v8l-4-3v-5z" fill="#777" />
            </G>
            <BigLine $mt={3}><T w={30}>Sort &amp;</T></BigLine><BigLine><T w={23}>Filter</T><Caret $ml={3} /></BigLine>
          </BigButton>
          <BigButton $w={36} $ml={2}>
            <G w={27} h={27}><circle cx="16" cy="10" r="7.800" stroke="#3b7cc4" strokeWidth="2" /><path d="M11 16l-9 9" stroke="#3b7cc4" strokeWidth="3" /></G>
            <BigLine $mt={3}><T w={32}>Find &amp;</T></BigLine><BigLine><T w={28}>Select</T><Caret $ml={2} /></BigLine>
          </BigButton>
        </GroupBody>
        <GroupFoot><T w={33} ml={70}>Editing</T></GroupFoot>
      </Group>
    </Ribbon>
  );
}

const FormulaBar = styled.div`
  display: flex;
  height: 43.500px;
  padding: 11px 0 0 5px;
  background: #e7e6e8;
`;
const Field = styled.div<{ $w: number; $ml?: number }>`
  display: flex;
  align-items: center;
  flex: none;
  width: ${(p) => p.$w}px;
  height: 22px;
  margin-left: ${(p) => p.$ml ?? 0}px;
  border: 1px solid #cfcfcf;
  background: #fff;
`;
const Sheet = styled.div`
  width: 1190px;
  height: 420.500px;
  overflow: hidden;
  border-right: 1px solid #bcbcbc;
  border-bottom: 1px solid #a9aaaa;
  background: #fefefe;
  font-family: ${SHEET};
  font-size: 12.500px;
  color: #222;
`;
const COLS = "23px 123px 279px 400px 133px 178px 1fr";
const HeadRow = styled.div`
  display: grid;
  grid-template-columns: ${COLS};
  height: 17px;
`;
const HeadCell = styled.div<{ $on?: boolean }>`
  display: flex;
  align-items: center;
  justify-content: center;
  border-right: 1px solid #c6c6c6;
  border-bottom: 1px solid #a9a9a9;
  background: #e7e6e8;
  font: 11.500px ${UI};
  ${(p) => p.$on && css`background: #d2d2d4; color: #217346; border-bottom: 2px solid #217346;`}
`;
const Corner = styled(HeadCell)`
  justify-content: flex-end;
`;
const SheetRow = styled.div`
  display: grid;
  grid-template-columns: ${COLS};
  height: 17.760px;
`;
const RowNo = styled.div<{ $on?: boolean }>`
  display: flex;
  align-items: center;
  justify-content: center;
  border-right: 1px solid #a9a9a9;
  border-bottom: 1px solid #cbcbcb;
  background: #e7e6e8;
  font: 11.500px ${UI};
  line-height: 16px;
  ${(p) => p.$on && css`background: #d2d2d4; color: #3f8560; border-right: 2px solid #217346;`}
`;
const Cell = styled.div<{ $open?: boolean }>`
  position: relative;
  display: flex;
  align-items: center;
  min-width: 0;
  padding: 1px 0 0 2px;
  border-bottom: 1px solid #dcdcdd;
  border-right: 1px solid ${(p) => (p.$open ? "transparent" : "#dadadb")};
  span { z-index: 1; }
`;
const Selection = styled.div`
  position: absolute;
  inset: -2px -2px -2px -1px;
  border: 2px solid #26734d;
  &::after {
    content: "";
    position: absolute;
    right: -3px;
    bottom: -3px;
    width: 5px;
    height: 5px;
    background: #217346;
    outline: 1px solid #fff;
  }
`;
const Cursor = styled.div`
  position: absolute;
  left: 73px;
  top: 2px;
  z-index: 2;
`;

type CellData = { t: string; w: number; link?: boolean; open?: boolean };
const DATA: Record<string, CellData> = {
  B1: { t: "Client", w: 32 }, C1: { t: "ClientID-public", w: 82.5 }, D1: { t: "Client secret ID", w: 83 },
  E1: { t: "Resource owner", w: 88 }, F1: { t: "Resource/Authorization Server", w: 169 },
  B2: { t: "BookMyShow", w: 74 }, C2: { t: "ID that identifies the client", w: 147 },
  D2: { t: "Bookmyshow registers this with google", w: 213.5 }, E2: { t: "Human", w: 38.5 }, F2: { t: "Google", w: 38.5 },
  B3: { t: "RahulShettyAcademy", w: 116.5 },
  B6: { t: "Step 1:", w: 37 }, C6: { t: "User sign into Google by hitting google Authorization server and get code", w: 398, open: true },
  C7: { t: "Application will use this code to hit google resource server in back end to get (Access token,First name, last name, email)", w: 658, open: true },
  C8: { t: "Application grants access to User by validating Access token", w: 323.5, link: true, open: true },
  C10: { t: "Book ticket - movie name date theatre name", w: 243 }, D10: { t: "Ticket booked and sent to email-", w: 178 },
};
const LETTERS = ["B", "C", "D", "E", "F", "G"];

function SheetGrid() {
  return (
    <Sheet>
      <HeadRow>
        <Corner><G w={11} h={11} ml={-3}><path d="M10 0v11H0z" fill="#b9b9b9" /></G></Corner>
        {LETTERS.map((l) => <HeadCell key={l} $on={l === "D"}>{l}</HeadCell>)}
      </HeadRow>
      {Array.from({ length: 23 }, (_, i) => i + 1).map((n) => (
        <SheetRow key={n}>
          <RowNo $on={n === 6}>{n}</RowNo>
          {LETTERS.map((l) => {
            const d = DATA[l + n];
            return (
              <Cell key={l} $open={d?.open}>
                {d && <T w={d.w} c={d.link ? "#3173b8" : undefined} u={d.link}>{d.t}</T>}
                {l === "D" && n === 6 && <Selection />}
                {l === "C" && n === 7 && (
                  <Cursor>
                    <G w={15} h={15}><path d="M5 1h5v4h4v5h-4v4H5v-4H1V5h4z" fill="#fff" stroke="#111" strokeWidth="1.500" /></G>
                  </Cursor>
                )}
              </Cell>
            );
          })}
        </SheetRow>
      ))}
    </Sheet>
  );
}

const SheetBar = styled.div`
  display: flex;
  height: 25.500px;
  padding-left: 22px;
  background: #e6e6e8;
  border-bottom: 1px solid #d2d2d2;
`;
const SheetBarPart = styled.div`
  display: flex;
  align-items: center;
  height: 25px;
`;
const SheetTab = styled.div`
  display: flex;
  align-items: center;
  justify-content: center;
  width: 57px;
  height: 24px;
  margin: -1px 0 0 36px;
  padding-top: 3px;
  border-bottom: 2px solid #217346;
  background: #fff;
`;
const ScrollButton = styled.div`
  display: flex;
  align-items: center;
  justify-content: center;
  width: 13px;
  height: 13px;
  border: 1px solid #b5b5b5;
  background: #fff;
`;
const ScrollTrack = styled.div`
  width: 425px;
  height: 13px;
  padding: 0 55px 0 54px;
  background: #dadadb;
`;
const ScrollThumb = styled.div`
  height: 13px;
  border: 1px solid #b5b5b5;
  background: #fff;
`;
const StatusBar = styled.div`
  display: flex;
  align-items: center;
  height: 18.500px;
  padding-left: 7px;
  background: #f2f2f3;
  color: #444;
  font-size: 11px;
`;
const ViewMode = styled.div<{ $ml: number; $on?: boolean }>`
  display: flex;
  align-items: center;
  justify-content: center;
  flex: none;
  width: 33px;
  height: 18px;
  margin-left: ${(p) => p.$ml}px;
  background: ${(p) => (p.$on ? "#c9c9ca" : "transparent")};
`;
const InnerTaskbar = styled.div`
  display: flex;
  align-items: center;
  height: 37px;
  background: #060810;
`;
const InnerSearch = styled.div`
  display: flex;
  align-items: center;
  width: 305px;
  height: 37px;
  margin-left: 13px;
  padding-left: 9px;
  background: #f2f2f3;
`;
const InnerActive = styled.div`
  display: flex;
  align-items: center;
  justify-content: center;
  width: 37px;
  height: 37px;
  margin-left: 11px;
  background: #343640;
`;
const InnerClock = styled.div`
  display: flex;
  flex-direction: column;
  align-items: center;
  width: 46px;
  margin-left: 13px;
  color: #fff;
  font-size: 12px;
`;
const Office = ({ ml, c, d, l }: { ml?: number; c: string; d: string; l: string }) => (
  <G w={22} h={21} ml={ml}>
    <path d="M6 0h16v21H6z" fill={c} /><path d="M6 10.500h16V21H6z" fill={d} /><path d="M0 5h11v11H0z" fill={d} />
    <text x="5.500" y="14" fontSize="9.500" fontWeight="700" fill="#fff" textAnchor="middle" fontFamily="Open Sans, sans-serif">{l}</text>
  </G>
);
const Camtasia = ({ ml, c }: { ml: number; c: string }) => (
  <G w={21} h={24} ml={ml}><path d="M0 0h21v24H0z" fill={c} /><path d="M16 8V5H9a3.500 3.500 0 0 0-3.500 3.500v7A3.500 3.500 0 0 0 9 19h7v-3" stroke="#fff" strokeWidth="3" /></G>
);

function Spreadsheet() {
  return (
    <Video>
      <TitleRow>
        <G w={14} h={14}><path d="M1 1h12v12H1zM4 1v4h6V1M4 13V9h6v4" stroke="#dfe8e3" strokeWidth="1.500" /></G>
        <G w={14} h={12} ml={15}><path d="M1 3h8a4 4 0 0 1 0 8M4 0L1 3l3 3" stroke="#dfe8e3" strokeWidth="1.500" /></G><Caret $ml={2} $c="#ccd" />
        <G w={14} h={12} ml={8}><path d="M13 3H5a4 4 0 0 0 0 8M10 0l3 3-3 3" stroke="#5b8a70" strokeWidth="1.500" /></G><Caret $ml={2} $c="#5b8a70" />
        <G w={12} h={16} ml={7}><path d="M4 0h3v7l5 1.500V13l-2 3H5L0 9l2-1 2 1z" fill="#e4ebe7" /></G>
        <Caret $ml={7} $c="#ccd" /><Caret $ml={14} $c="#ccd" />
        <T w={67} ml={426} s={11} c="#dfe8e3">Book1 - Excel</T>
        <SignIn><T w={32} s={11} c="#217346">Sign in</T></SignIn>
        <G w={12} h={10} ml={22}><path d="M.5.5h11v9H.5zM0 2.500h12M6 8V4M4.500 5.500L6 4l1.500 1.500" stroke="#dfe8e3" /></G>
        <G w={9} h={10} ml={31}><path d="M0 5h9" stroke="#dfe8e3" /></G>
        <G w={9} h={9} ml={32}><path d="M.5 2.500h6v6h-6zM2.500 2.500v-2h6v6h-2" stroke="#dfe8e3" /></G>
        <G w={9} h={9} ml={31}><path d="M0 0l9 9M9 0L0 9" stroke="#dfe8e3" /></G>
      </TitleRow>
      <MenuRow>
        <T w={16} ml={18}>File</T>
        <HomeTab><T w={29}>Home</T></HomeTab>
        <T w={26} ml={12}>Insert</T><T w={24} ml={23.5}>Draw</T><T w={57.5} ml={24}>Page Layout</T><T w={43.500} ml={23.5}>Formulas</T>
        <T w={21.500} ml={24}>Data</T><T w={33} ml={24}>Review</T><T w={22} ml={23.500}>View</T><T w={22} ml={24}>Help</T>
        <G w={9} h={14} ml={27}><path d="M3 10V8a4 4 0 1 1 3.500 0v2zM3 12.500h3.500" stroke="#dfe8e3" /></G>
        <T w={134} ml={12}>Tell me what you want to do</T>
        <G w={13} h={14} ml={428}><circle cx="6" cy="4.500" r="3.800" stroke="#dfe8e3" /><path d="M1 14c0-3 1.500-5 4-6M10 8v5M7.500 10.500h5" stroke="#dfe8e3" /></G>
        <T w={26} ml={4}>Share</T>
      </MenuRow>
      <RibbonPanel />
      <FormulaBar>
        <Field $w={90}><T w={14.5} ml={5} s={11.5} c="#555">D6</T><Caret $ml={57} /></Field>
        <G w={2} h={22} ml={12}><path d="M1 6v11" stroke="#aaa" strokeWidth="2" strokeDasharray="2 2" /></G>
        <Field $w={97} $ml={12}>
          <G w={10} h={9} ml={11}><path d="M.5 0l9 9M9.500 0l-9 9" stroke="#bcbcbc" strokeWidth="1.300" /></G>
          <G w={12} h={9} ml={21}><path d="M.5 5l3.500 3.500L11.500 0" stroke="#bcbcbc" strokeWidth="1.700" /></G>
          <T w={10} ml={21} s={13} c="#666" f={`"Liberation Serif"`}><b><em>fx</em></b></T>
        </Field>
        <Field $w={980} $ml={3} />
      </FormulaBar>
      <SheetGrid />
      <SheetBar>
        <SheetBarPart>
          <G w={5} h={8}><path d="M4 0v8L1 4z" fill="#c0c0c0" /></G>
          <G w={5} h={8} ml={22}><path d="M1 0v8l3-4z" fill="#c0c0c0" /></G>
        </SheetBarPart>
        <SheetTab><T w={35} s={11.5} c="#217346" b={700}>Sheet1</T></SheetTab>
        <SheetBarPart>
          <G w={14} h={14} ml={29}><circle cx="7" cy="7" r="6.500" stroke="#8a8a8a" /><path d="M7 3.500v7M3.500 7h7" stroke="#777" strokeWidth="1.500" /></G>
          <G w={2} h={12} ml={535}><path d="M1 1v10" stroke="#aaa" strokeWidth="2" strokeDasharray="2 2" /></G>
          <Slot $ml={12} />
          <ScrollButton><G w={4} h={6}><path d="M4 0v6L0 3z" fill="#666" /></G></ScrollButton>
          <ScrollTrack><ScrollThumb /></ScrollTrack>
          <ScrollButton><G w={4} h={6}><path d="M0 0v6l4-3z" fill="#666" /></G></ScrollButton>
        </SheetBarPart>
      </SheetBar>
      <StatusBar>
        <T w={28}>Ready</T>
        <ViewMode $ml={921} $on><G w={12} h={12}><path d="M.5.5h11v11H.5zM0 4h12M0 8h12M4.200 0v12M8 0v12" stroke="#666" /></G></ViewMode>
        <ViewMode $ml={1}><G w={12} h={12}><path d="M.5.500h11v11H.5zM3 3h6v6.500H3zM4 5h4M4 7h4" stroke="#777" /></G></ViewMode>
        <ViewMode $ml={0}><G w={12} h={12}><path d="M.5.5h11v11H.5zM3.500 0v7M8 0v7H3" stroke="#777" /></G></ViewMode>
        <G w={5} h={3} ml={5}><path d="M0 1.500h5" stroke="#555" strokeWidth="1.700" /></G>
        <G w={88} h={10} ml={4}><path d="M0 5h88" stroke="#a5a5a5" /><path d="M42 0h4v10h-4z" fill="#6a6a6a" /></G>
        <G w={6} h={6} ml={3}><path d="M3 0v6M0 3h6" stroke="#555" strokeWidth="1.500" /></G>
        <T w={26} ml={9}>100%</T>
      </StatusBar>
      <InnerTaskbar>
        <Slot $ml={14}><WinLogo s={15} c="#fff" /></Slot>
        <InnerSearch>
          <G w={18} h={18}><circle cx="9" cy="9" r="7.800" stroke="#151515" strokeWidth="2.400" /></G>
          <T w={114} ml={9} s={14.5} c="#4c4c4c">Type here to search</T>
          <G w={10} h={18} ml={131}><rect x="3" y="1" width="4.500" height="10" rx="2" stroke="#444" /><path d="M.8 7.500v3a4.300 4.300 0 0 0 8.600 0v-3M5 15v3" stroke="#444" /></G>
        </InnerSearch>
        <TaskViewGlyph s={16} c="#ddd" ml={13} />
        <FolderLogo w={20} h={19} ml={25} />
        <G w={21} h={22} ml={19}><path d="M6 6V3a3 3 0 0 1 3-3h3a3 3 0 0 1 3 3v3" stroke="#ccc" strokeWidth="1.500" /><path d="M0 6h21v16H0z" fill="#f7f7f7" /><path d="M5.500 9h4.500v4.500H5.500z" fill="#f25022" /><path d="M11 9h4.500v4.500H11z" fill="#7fba00" /><path d="M5.500 14.500h4.500V19H5.500z" fill="#00a4ef" /><path d="M11 14.500h4.500V19H11z" fill="#ffb900" /></G>
        <G w={22} h={20} ml={19}><path d="M0 6L11 0l11 6v14H0z" fill="#fff" /><path d="M1 7h20l-9 5 2 3-4-3z" fill="#15171f" /></G>
        <G w={18} h={20} ml={20}><path d="M3 11.500h12.500c.5-4-2-7-6.500-7-3.500 0-6 2-7 5C3 3 7 1.500 10 1.500c5 0 7 5 6.500 10M4.500 12c0 5 6 6.500 11 4" stroke="#0b7be0" strokeWidth="3.200" /></G>
        <G w={19} h={20} ml={20}><path d="M6 1l13-1-2 20H0z" fill="#8ecbd9" /><path d="M6 1l9-.7L11 20H0z" fill="#5ba5b9" /><path d="M5 1h13" stroke="#d5e6ea" strokeWidth="2" /></G>
        <G w={20} h={18} ml={21}><path d="M0 0h20v18H0z" fill="#111" stroke="#999" /><path d="M0 1.500h20" stroke="#bbb" strokeWidth="3" /><path d="M3 7h4M9 8h4" stroke="#ddd" /></G>
        <G w={20} h={20} ml={19}><circle cx="10" cy="10.500" r="9.500" fill="#ff8a16" /><circle cx="9.500" cy="10" r="5" fill="#3b62d8" /><path d="M10 0c5 2 10 5 9.500 11-2-1-3-5-6-6zM1 5c2-1 5 0 6 2l3 1-4 5C1 14 0 9 1 5z" fill="#ffc322" /><path d="M3 13c4 4 11 3 12-3 2 6-3 9-7 9-3-1-4-3-5-6z" fill="#f4502a" /></G>
        <InnerActive><Office c="#21a366" d="#107c41" l="X" /></InnerActive>
        <Office ml={9} c="#41a5ee" d="#1b5ebe" l="W" />
        <G w={14} h={20} ml={20}><path d="M0 0h10l4 4v16H0z" fill="#fafafa" /><path d="M10 0v4h4" stroke="#999" /></G>
        <EclipseLogo s={21} ml={22} />
        <ChromeLogo s={20} ml={19} />
        <Camtasia ml={18} c="#5b9a10" />
        <Camtasia ml={18} c="#f45d42" />
        <G w={14} h={16} ml={31}><circle cx="9.500" cy="3" r="2.500" stroke="#eee" /><circle cx="4" cy="8.500" r="2.300" stroke="#eee" /><path d="M6 8c3-3.500 7-2 7 2M.5 16c0-6 7-6 7 0" stroke="#eee" /></G>
        <G w={11} h={7} ml={23}><path d="M.5 6L5.500 1l5 5" stroke="#eee" strokeWidth="1.300" /></G>
        <G w={14} h={9} ml={16}><path d="M.5.5h11.500v8H.5zM13 3v3" stroke="#eee" /><path d="M2 2h5v5H2z" fill="#eee" /></G>
        <G w={12} h={12} ml={16}><path d="M.5 12A11.500 11.500 0 0 1 12 .5M4 12a8 8 0 0 1 8-8M7 12a5 5 0 0 1 5-5" stroke="#ddd" /></G>
        <G w={14} h={12} ml={14}><path d="M0 4h2.500L6 1v10L2.500 8H.5V4M8 4a3 3 0 0 1 0 4M10 2a6 6 0 0 1 0 8M12 .5a8 8 0 0 1 0 11" stroke="#eee" /></G>
        <InnerClock><T w={37}>3:00 PM</T><T w={46}>8/21/2019</T></InnerClock>
        <G w={15} h={16} ml={14}><path d="M0 0h14v11H8l-3 3v-3H0z" fill="#fff" /><path d="M2.500 3.500h9M2.500 6h9M2.500 8.500h9" stroke="#333" /><circle cx="12" cy="14" r="4.500" fill="#333" stroke="#aaa" /></G>
      </InnerTaskbar>
    </Video>
  );
}

/* ---------- desktop taskbar ---------- */

const Taskbar = styled.footer`
  display: flex;
  height: 60px;
  background: linear-gradient(90deg, #d3d4d6, #d5d5d5 20%, #d4d4d4 70%, #d6d4d6);
`;
const SysButton = styled.div`
  display: flex;
  align-items: center;
  justify-content: center;
  width: 72px;
  height: 60px;
`;
const AppButton = styled.div<{ $ml?: number; $on?: boolean; $run?: "wide" | "slim" }>`
  display: flex;
  align-items: center;
  justify-content: center;
  flex: none;
  width: 73px;
  height: 60px;
  margin-left: ${(p) => p.$ml ?? 2}px;
  background:
    linear-gradient(#0078d7, #0078d7) bottom / ${(p) => (p.$run === "wide" ? "73px" : p.$run ? "61px" : "0")} 3px no-repeat
    ${(p) => (p.$on ? ", #eeeeee" : "")};
`;
const Tray = styled.div`
  display: flex;
  align-items: center;
  margin-left: auto;
  width: 491px;
  height: 60px;
  color: #000;
`;
const Clock = styled.div`
  display: flex;
  flex-direction: column;
  align-items: center;
  gap: 4px;
  width: 93px;
  margin-left: 21px;
`;
const ShowDesktop = styled.div`
  align-self: stretch;
  width: 7px;
  margin-left: auto;
  border-left: 2px solid #aaa;
`;
const Disc = styled.span`
  display: flex;
  border-radius: 50%;
  background: #fff;
  color: #ff6c37;
`;
const EdgeMark = styled(FaEdge)`
  path { fill: url(#edgeFill); }
`;
const PhoneLinkLogo = () => (
  <G w={36} h={33}>
    <path d="M2 1a1 1 0 0 1 1-1h30a1 1 0 0 1 1 1v23H2z" fill="#1a86cc" /><path d="M0 24h36v1a1.500 1.500 0 0 1-1.500 1.500h-33A1.500 1.500 0 0 1 0 25z" fill="#17588f" />
    <path d="M7 5.500A1.500 1.500 0 0 1 8.500 4h13A1.500 1.500 0 0 1 23 5.500V16H7z" fill="#38c6f4" /><path d="M7 16h16v6H7z" fill="#159fe0" /><path d="M7 22h16v6H7z" fill="#0b78c8" /><path d="M7 28h16v4H7z" fill="#124f86" />
    <path d="M11 6.500h8" stroke="#1482b5" strokeWidth="1.500" />
  </G>
);

function DesktopTaskbar() {
  return (
    <Taskbar>
      <SysButton><WinLogo s={24} c="#000" /></SysButton>
      <SysButton><G w={34} h={34}><circle cx="19.500" cy="13.500" r="12" stroke="#000" strokeWidth="2.800" /><path d="M12 23L1.500 33" stroke="#000" strokeWidth="3.200" /></G></SysButton>
      <SysButton><TaskViewGlyph s={24} c="#111" /></SysButton>
      <AppButton $ml={4}>
        <G w={36} h={36}>
          <defs>
            <linearGradient id="edgeFill" x1="1" y1="0.200" x2="0.100" y2="0.900"><stop offset="0" stopColor="#6be04f" /><stop offset=".35" stopColor="#2fc3c9" /><stop offset=".65" stopColor="#1488d8" /><stop offset="1" stopColor="#0f4fa8" /></linearGradient>
          </defs>
          <EdgeMark size={36} />
        </G>
      </AppButton>
      <AppButton><FolderLogo w={32} h={27} /></AppButton>
      <AppButton><StoreLogo w={36} h={36} /></AppButton>
      <AppButton>
        <G w={32} h={35}>
          <path d="M14.500 0L2 7.500A4 4 0 0 0 0 11v13l7-3.500V16c0-2 1-3.500 2.500-4.500L20 5z" fill="#8d7bdc" />
          <path d="M14 .5c1.500-.7 3-.6 4.500.2L30 7.500a4 4 0 0 1 2 3.500v8L23.500 15c-.5-3-3-4.500-6-5.500C15 8 13 4 14 .5z" fill="#3a8fe2" />
          <path d="M32 11v13a4 4 0 0 1-2 3.500l-8 4.700L15 25l6-4c2-1.300 2.500-3 2.500-6z" fill="#754aa3" />
          <path d="M0 24a4 4 0 0 0 2 3.500l11.500 6.800a5 5 0 0 0 5 0l6-3.600-9.500-5.700L7 20.500z" fill="#bb92ef" />
          <path d="M0 24l7-5v3l5 3.500L6 29.500 2 27.500A4 4 0 0 1 0 24z" fill="#1b3f9d" />
          <path d="M15.500 10.500l6.500 3.500v7l-6.500 4-6.500-4v-7z" fill="#d5d5d5" />
        </G>
      </AppButton>
      <AppButton $on $run="wide"><ChromeLogo s={36} /></AppButton>
      <AppButton><PhoneLinkLogo /></AppButton>
      <AppButton><EclipseLogo s={36} /></AppButton>
      <AppButton><Disc><SiPostman size={33} /></Disc></AppButton>
      <AppButton $run="slim"><Disc><SiPostman size={33} /></Disc></AppButton>
      <AppButton $run="slim">
        <G w={36} h={34}>
          <path d="M1 3h20l5 5v23l-25 2z" fill="#fbfbfb" stroke="#777" /><path d="M3 8h18l2 4v4L3 17z" fill="#d8ecf8" /><path d="M3 17l22-2v15l-22 1z" fill="#8fd42c" /><path d="M3 24l22-1v7l-22 1z" fill="#2f9c16" />
          <path d="M5 18c2-5 9-6 13-3l3 5-8 2-6 1z" fill="#39a935" stroke="#1c5e19" /><circle cx="14" cy="13" r="3" fill="#fff" stroke="#333" /><circle cx="18" cy="12" r="2.700" fill="#fff" stroke="#333" /><path d="M4 20h17M15 26l3 1 6-1" stroke="#3a2a16" strokeWidth="1.500" />
          <path d="M3 1.500v3M6 1.500v3M9 1.500v3M12 1.500v3M15 1.500v3M18 1.500v3" stroke="#888" /><path d="M33 1L23 24l1.500-.5L35 3z" fill="#f3c022" stroke="#8a6b16" strokeWidth=".7" /><path d="M32.500 0l3 1.500-1.200 3-3-1.500z" fill="#b33a3a" />
        </G>
      </AppButton>
      <AppButton $run="slim">
        <G w={34} h={34}>
          <ellipse cx="14" cy="16" rx="14" ry="8" fill="#f2e4e4" stroke="#e58b8b" transform="rotate(-8 14 16)" /><ellipse cx="16" cy="10" rx="15" ry="8.500" fill="#fafafa" stroke="#ea3d45" strokeWidth="1.700" transform="rotate(-14 16 10)" />
          <path d="M16 4l4 15M5 11l14 8" stroke="#8a929c" strokeWidth="2" /><ellipse cx="20" cy="28" rx="3" ry="5.500" stroke="#1d86d0" strokeWidth="2.200" /><ellipse cx="28" cy="22" rx="5.500" ry="3.300" stroke="#1d86d0" strokeWidth="2.200" transform="rotate(28 28 22)" />
        </G>
      </AppButton>
      <Tray>
        <G w={18} h={10}><path d="M.5 9.500L9 1l8.500 8.500" stroke="#000" strokeWidth="1.500" /></G>
        <G w={16} h={22} ml={20}><rect x=".7" y="5.700" width="10" height="10.600" rx="1.500" stroke="#000" strokeWidth="1.300" /><path d="M11 9.500l4-3v9l-4-3M1 2.500q6-3.500 12 0M1 19.500q6 3.500 12 0" stroke="#000" strokeWidth="1.200" /></G>
        <G w={24} h={17} ml={15}><path d="M6 16a5 5 0 0 1-1-10 7.500 7.500 0 0 1 13-1 5.500 5.500 0 0 1 .5 11z" fill="#8b8b8b" stroke="#111" strokeWidth="1.500" /><path d="M4 15l10-7 6 7z" fill="#ececec" /></G>
        <G w={15} h={24} ml={16}><rect x="2.500" width="10" height="19" rx="2" fill="#000" /><path d="M.7 12v5.500c0 2 1 3 3 3h7.600c2 0 3-1 3-3V12M7.500 20v3.500M4 23.500h7" stroke="#000" strokeWidth="1.300" /></G>
        <G w={24} h={17} ml={17}><path d="M6 4.500h15.500v11H5v-4M23.500 8v4" stroke="#000" strokeWidth="1.300" /><path d="M8 6.500h10.500v7H7z" fill="#000" /><path d="M.7 3.500h6V8l-2 2h-2l-2-2zM2 0v3M5.500 0v3M3.700 10v5.500H6" stroke="#000" strokeWidth="1.200" fill="#d5d5d5" /></G>
        <G w={18} h={18} ml={16}><path d="M.6 18A17.400 17.400 0 0 1 18 .6M5.500 18A12.500 12.500 0 0 1 18 5.500M10 18a8 8 0 0 1 8-8" stroke="#222" strokeWidth="1.200" /><circle cx="16.500" cy="16.500" r="1.600" fill="#000" /></G>
        <G w={22} h={18} ml={15}><path d="M.7 6v6h3.500L9 17V1L4.200 6zM12 6.500a4 4 0 0 1 0 5M15 4a8 8 0 0 1 0 10M18.500 1.500a12 12 0 0 1 0 15" stroke="#111" strokeWidth="1.200" /></G>
        <T w={33} ml={18} s={18}>ENG</T>
        <Clock><T w={44} s={18}>22:58</T><T w={93} s={18}>08-11-2023</T></Clock>
        <G w={36} h={36} ml={28}>
          <path d="M0 0h24v18h-9l-4 5-4-5H0z" fill="#000" /><path d="M4.500 5.500h15M4.500 9.500h15M4.500 13.500h10" stroke="#fff" />
          <circle cx="23.500" cy="23" r="12" fill="#d0d0d0" fillOpacity=".93" stroke="#888" />
          <text x="23.500" y="29" fontSize="17" fontWeight="600" textAnchor="middle" fill="#000" fontFamily="Open Sans, sans-serif">1</text>
        </G>
        <ShowDesktop />
      </Tray>
    </Taskbar>
  );
}

export default function App() {
  return (
    <Screen>
      <Global />
      <BrowserTop />
      <Page>
        <PageBody>
          <Player>
            <Spreadsheet />
            <Shade />
            <LectureTitle>
              <T w={770} s={24} c="#fff" b={500} f={`Inter, "Open Sans", sans-serif`}>55. Flow procedure in achieving OAuth 2.0 Authentication mechanism</T>
            </LectureTitle>
            <NavButton $side="left"><G w={10} h={17}><path d="M8.500 1.500l-7 7 7 7" stroke="#fff" strokeWidth="2.600" /></G></NavButton>
            <NavButton $side="right"><G w={10} h={17}><path d="M1.500 1.500l7 7-7 7" stroke="#fff" strokeWidth="2.600" /></G></NavButton>
            <Watermark><T w={38} s={13} c="rgba(190,190,190,.75)">ûdemy</T></Watermark>
          </Player>
        </PageBody>
      </Page>
      <DesktopTaskbar />
    </Screen>
  );
}
